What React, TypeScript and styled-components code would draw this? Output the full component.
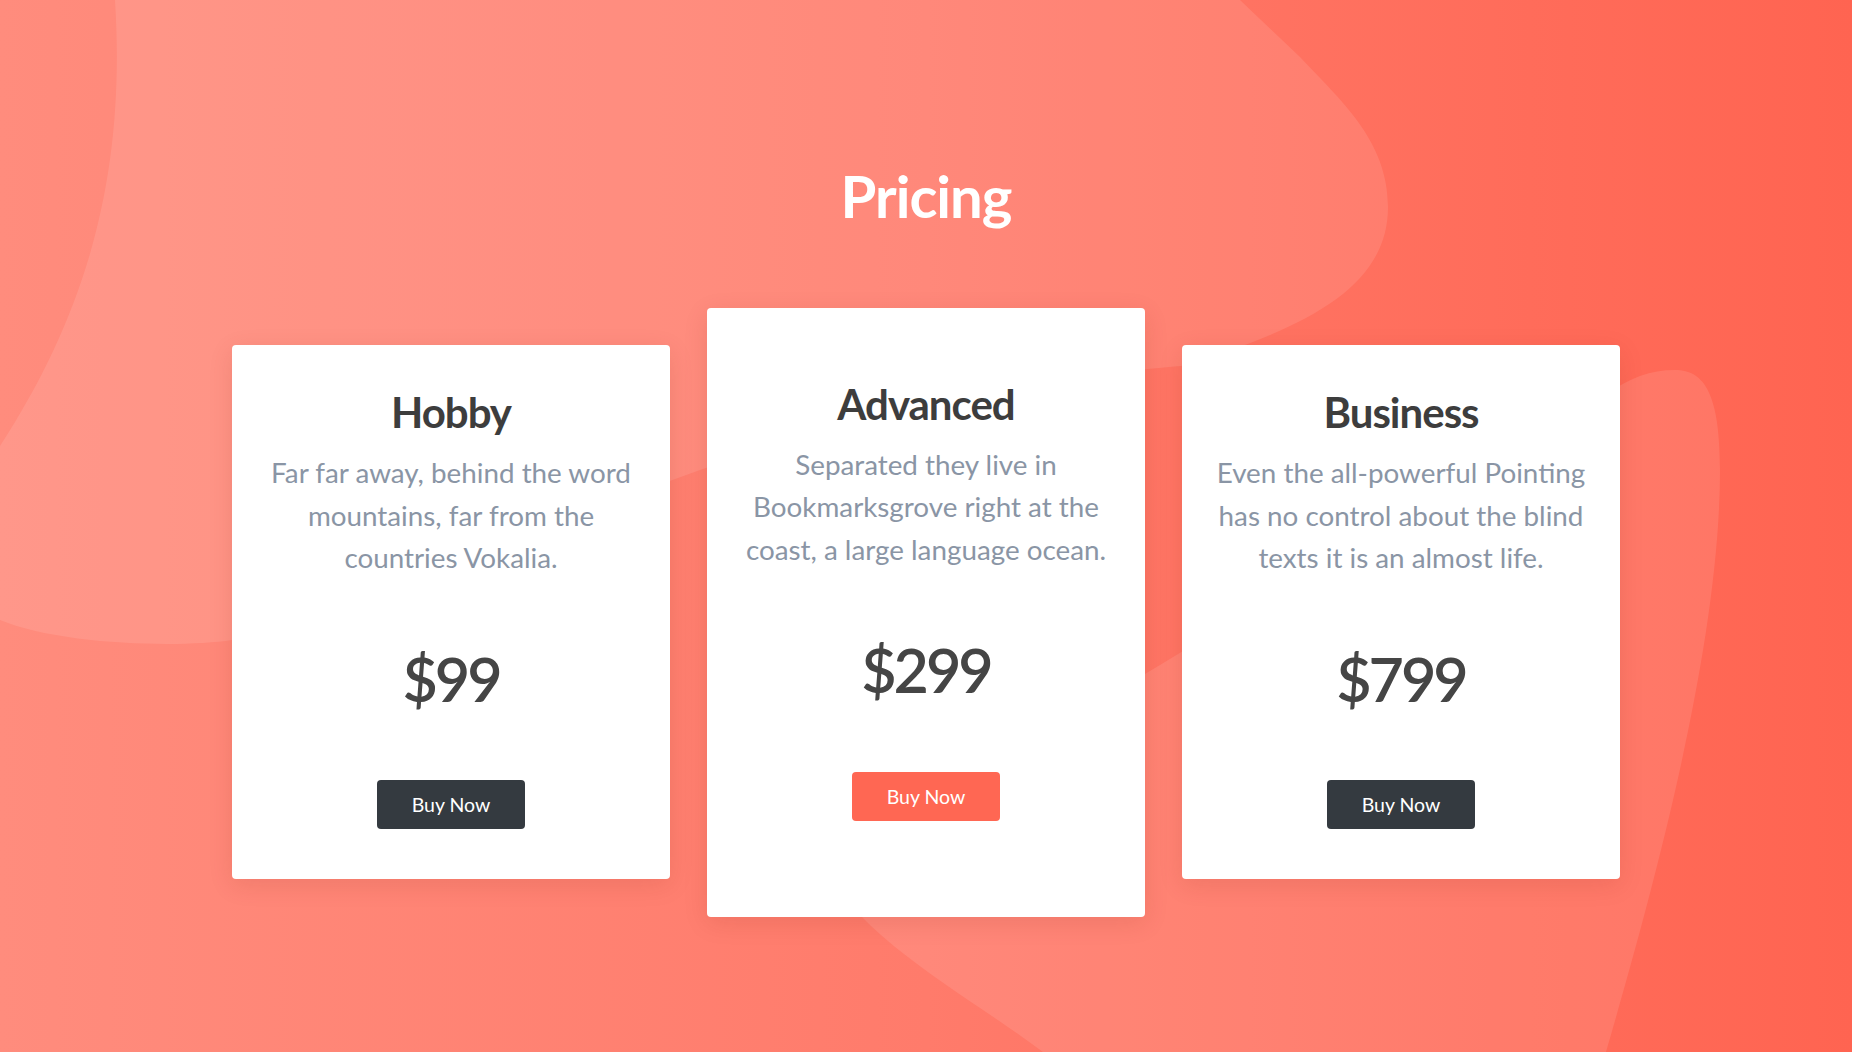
import React from "react";
import styled, { createGlobalStyle } from "styled-components";

const GlobalStyle = createGlobalStyle`
  html, body {
    margin: 0;
    padding: 0;
  }
  body {
    font-family: Lato, "Open Sans", "Liberation Sans", sans-serif;
    -webkit-font-smoothing: antialiased;
  }
  * { box-sizing: border-box; }
`;

const Page = styled.main`
  position: relative;
  min-height: 100vh;
  overflow: hidden;
  background: linear-gradient(90deg, #ff8c7d 0%, #ff7b6b 50%, #ff6451 100%);
`;

const Backdrop = styled.svg`
  position: absolute;
  inset: 0;
  width: 100%;
  height: 100%;
  z-index: 0;
  pointer-events: none;
`;

const Content = styled.section`
  position: relative;
  z-index: 1;
  display: flex;
  flex-direction: column;
  align-items: center;
  padding-top: 161px;
`;

const Heading = styled.h2`
  margin: 0 0 77px;
  font-size: 58px;
  line-height: 1.2;
  font-weight: 700;
  letter-spacing: -1px;
  color: #ffffff;
`;

const Plans = styled.div`
  display: grid;
  grid-template-columns: repeat(3, 438px);
  gap: 37px;
  align-items: center;
  justify-content: center;
`;

const Card = styled.article<{ $featured?: boolean }>`
  display: flex;
  flex-direction: column;
  align-items: center;
  text-align: center;
  background: #ffffff;
  border-radius: 4px;
  box-shadow: 0 6px 24px rgba(120, 30, 20, 0.12);
  padding: ${(p) => (p.$featured ? "71px 30px 96px" : "42px 30px 50px")};
`;

const PlanName = styled.h3`
  margin: 0;
  font-size: 42px;
  line-height: 1.2;
  font-weight: 700;
  letter-spacing: -1px;
  color: #3d3d3d;
`;

const PlanText = styled.p`
  margin: 15px 0 0;
  font-size: 27.8px;
  line-height: 42.5px;
  font-weight: 400;
  color: #8a95a5;
`;

const Price = styled.div`
  margin-top: 62px;
  font-size: 61px;
  line-height: 1.2;
  font-weight: 600;
  letter-spacing: -3px;
  color: #454545;
`;

const BuyButton = styled.button<{ $accent?: boolean }>`
  margin-top: 65px;
  border: none;
  border-radius: 4px;
  padding: 10px 35px;
  font-family: inherit;
  font-size: 19.5px;
  line-height: 29px;
  font-weight: 400;
  color: #ffffff;
  cursor: pointer;
  background: ${(p) => (p.$accent ? "#ff6753" : "#343a40")};
`;

type Plan = {
  name: string;
  text: string;
  price: string;
  featured?: boolean;
};

const plans: Plan[] = [
  {
    name: "Hobby",
    text: "Far far away, behind the word mountains, far from the countries Vokalia.",
    price: "$99",
  },
  {
    name: "Advanced",
    text: "Separated they live in Bookmarksgrove right at the coast, a large language ocean.",
    price: "$299",
    featured: true,
  },
  {
    name: "Business",
    text: "Even the all-powerful Pointing has no control about the blind texts it is an almost life.",
    price: "$799",
  },
];

export default function App() {
  return (
    <>
      <GlobalStyle />
      <Page>
        <Backdrop viewBox="0 0 1852 1052" preserveAspectRatio="none">
          <path
            d="M115 0 C125 160 95 300 0 446 L0 620 C60 645 180 648 232 640 L700 470 C900 400 1100 372 1181 366 C1300 330 1388 290 1388 207 C1388 140 1340 100 1300 57 L1240 0 Z"
            fill="#ffffff"
            fillOpacity="0.1"
          />
          <path
            d="M820 860 C860 940 960 990 1043 1052 L1606 1052 C1650 900 1720 650 1720 470 C1720 395 1705 370 1675 370 C1650 370 1630 378 1610 392 L1160 665 C1000 760 900 820 820 860 Z"
            fill="#ffffff"
            fillOpacity="0.1"
          />
        </Backdrop>
        <Content>
          <Heading>Pricing</Heading>
          <Plans>
            {plans.map((plan) => (
              <Card key={plan.name} $featured={plan.featured}>
                <PlanName>{plan.name}</PlanName>
                <PlanText>{plan.text}</PlanText>
                <Price>{plan.price}</Price>
                <BuyButton $accent={plan.featured}>Buy Now</BuyButton>
              </Card>
            ))}
          </Plans>
        </Content>
      </Page>
    </>
  );
}
